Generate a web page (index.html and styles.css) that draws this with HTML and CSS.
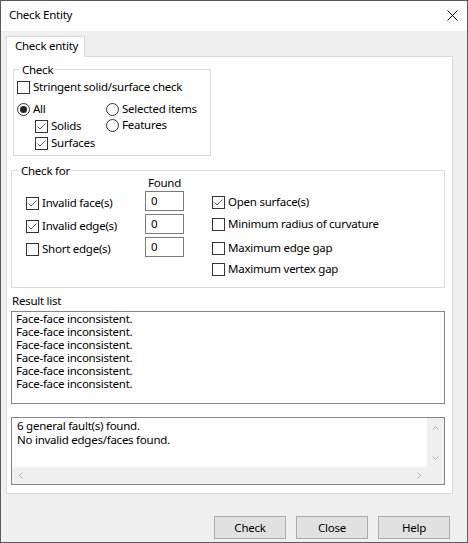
FILE: index.html
```html
<!DOCTYPE html>
<html>
<head>
<meta charset="utf-8">
<title>Check Entity</title>
<link rel="stylesheet" href="styles.css">
</head>
<body>
<div class="window">
  <div class="titlebar">
    <span class="title">Check Entity</span>
    <svg class="close" width="11" height="11" viewBox="0 0 11 11"><path d="M0.5 0.5 L10.5 10.5 M10.5 0.5 L0.5 10.5" stroke="#000" stroke-width="1" fill="none"/></svg>
  </div>
  <div class="body">
    <div class="tab">Check entity</div>
    <div class="panel">
      <div class="group group-check">
        <span class="legend">Check</span>
        <label class="opt"><span class="cb"></span>Stringent solid/surface check</label>
        <div class="mode">
          <div class="mode-left">
            <label class="opt"><span class="rb on"></span>All</label>
            <label class="opt sub"><span class="cb"><svg width="11" height="11" viewBox="0 0 11 11"><path d="M1.5 5.5 L4 8 L9.5 2.5" stroke="#5a5a5a" fill="none"/></svg></span>Solids</label>
            <label class="opt sub"><span class="cb"><svg width="11" height="11" viewBox="0 0 11 11"><path d="M1.5 5.5 L4 8 L9.5 2.5" stroke="#5a5a5a" fill="none"/></svg></span>Surfaces</label>
          </div>
          <div class="mode-right">
            <label class="opt short"><span class="rb"></span>Selected items</label>
            <label class="opt short"><span class="rb"></span>Features</label>
          </div>
        </div>
      </div>

      <div class="group group-for">
        <span class="legend">Check for</span>
        <div class="for-grid">
          <span class="found">Found</span>
          <label class="opt for-opt"><span class="cb"><svg width="11" height="11" viewBox="0 0 11 11"><path d="M1.5 5.5 L4 8 L9.5 2.5" stroke="#5a5a5a" fill="none"/></svg></span>Invalid face(s)</label>
          <div class="tb">0</div>
          <label class="opt for-opt"><span class="cb"><svg width="11" height="11" viewBox="0 0 11 11"><path d="M1.5 5.5 L4 8 L9.5 2.5" stroke="#5a5a5a" fill="none"/></svg></span>Invalid edge(s)</label>
          <div class="tb">0</div>
          <label class="opt for-opt"><span class="cb"></span>Short edge(s)</label>
          <div class="tb">0</div>
        </div>
        <div class="for-right">
          <label class="opt r22"><span class="cb"><svg width="11" height="11" viewBox="0 0 11 11"><path d="M1.5 5.5 L4 8 L9.5 2.5" stroke="#5a5a5a" fill="none"/></svg></span>Open surface(s)</label>
          <label class="opt r24"><span class="cb"></span>Minimum radius of curvature</label>
          <label class="opt r21"><span class="cb"></span>Maximum edge gap</label>
          <label class="opt r22"><span class="cb"></span>Maximum vertex gap</label>
        </div>
      </div>

      <div class="result-label">Result list</div>
      <div class="list">
        <div class="line">Face-face inconsistent.</div>
        <div class="line">Face-face inconsistent.</div>
        <div class="line">Face-face inconsistent.</div>
        <div class="line">Face-face inconsistent.</div>
        <div class="line">Face-face inconsistent.</div>
        <div class="line">Face-face inconsistent.</div>
      </div>

      <div class="summary">
        <div class="summary-text">
          <div>6 general fault(s) found.</div>
          <div>No invalid edges/faces found.</div>
        </div>
        <div class="vscroll">
          <svg width="7" height="4" viewBox="0 0 7 4"><path d="M0.5 3.5 L3.5 0.5 L6.5 3.5" stroke="#b4b4b4" fill="none"/></svg>
          <svg width="7" height="4" viewBox="0 0 7 4"><path d="M0.5 0.5 L3.5 3.5 L6.5 0.5" stroke="#b4b4b4" fill="none"/></svg>
        </div>
        <div class="hscroll">
          <svg width="4" height="7" viewBox="0 0 4 7"><path d="M3.5 0.5 L0.5 3.5 L3.5 6.5" stroke="#b4b4b4" fill="none"/></svg>
          <svg width="4" height="7" viewBox="0 0 4 7"><path d="M0.5 0.5 L3.5 3.5 L0.5 6.5" stroke="#b4b4b4" fill="none"/></svg>
        </div>
        <div class="corner"></div>
      </div>
    </div>
    <div class="buttons">
      <button class="btn">Check</button>
      <button class="btn">Close</button>
      <button class="btn">Help</button>
    </div>
  </div>
</div>
</body>
</html>
```

FILE: styles.css
```css
* { box-sizing: border-box; }

body {
  margin: 0;
  font-family: "Noto Sans", sans-serif;
  font-size: 11.5px;
  letter-spacing: -0.25px;
  color: #000;
  background: #fff;
}

.window {
  width: 468px;
  height: 543px;
  border: 1px solid #5a5a5a;
  background: #f0f0f0;
}

.titlebar {
  height: 30px;
  background: #fff;
  display: flex;
  justify-content: space-between;
  align-items: flex-start;
  padding: 6px 9px 0 8px;
}

.title { line-height: 15px; }

.close { margin-top: 3px; }

.body { padding: 5px 0 0 5px; }

.tab {
  position: relative;
  z-index: 1;
  width: 79px;
  height: 21px;
  margin-bottom: -1px;
  border: 1px solid #d9d9d9;
  border-bottom: none;
  background: #fff;
  padding: 1px 0 0 8px;
  line-height: 15px;
}

.panel {
  width: 447px;
  height: 438px;
  border: 1px solid #d9d9d9;
  background: #fff;
}

.group {
  position: relative;
  border: 1px solid #dcdcdc;
}

.legend {
  position: absolute;
  top: -8px;
  left: 7px;
  background: #fff;
  padding: 0 2px;
  line-height: 15px;
}

.group-check {
  margin: 12px 0 0 6px;
  width: 198px;
  height: 87px;
  padding: 9px 0 0 3px;
}

.group-check .legend { left: 6px; }

.opt {
  display: flex;
  align-items: flex-start;
  gap: 3px;
  height: 17px;
  line-height: 15px;
  white-space: nowrap;
}

.cb {
  flex: none;
  width: 13px;
  height: 13px;
  margin-top: 2px;
  border: 1px solid #333;
  background: #fff;
  display: flex;
}

.rb {
  flex: none;
  width: 13px;
  height: 13px;
  margin-top: 2px;
  border: 1px solid #333;
  border-radius: 50%;
  background: #fff;
  display: flex;
  align-items: center;
  justify-content: center;
}

.rb.on::after {
  content: "";
  width: 7px;
  height: 7px;
  border-radius: 50%;
  background: #222;
}

.mode {
  display: flex;
  margin-top: 5px;
}

.mode-left { width: 89px; }

.sub { padding-left: 18px; }

.opt.short { height: 16px; }

.group-for {
  margin: 14px 0 0 4px;
  width: 434px;
  height: 118px;
  display: flex;
  align-items: flex-start;
  padding: 4px 0 0 14px;
}

.for-grid {
  display: grid;
  grid-template-columns: 119px 39px;
  grid-template-rows: 16px 23px 23px 23px;
}

.found {
  grid-column: 2;
  text-align: center;
  line-height: 15px;
}

.for-opt { margin-top: 4px; }

.tb {
  width: 39px;
  height: 20px;
  border: 1px solid #7a7a7a;
  background: #fff;
  padding-left: 5px;
  line-height: 18px;
}

.for-right {
  margin: 19px 0 0 28px;
}

.r22 { height: 22px; }
.r24 { height: 24px; }
.r21 { height: 21px; }

.result-label {
  margin: 5px 0 0 5px;
  line-height: 15px;
}

.list {
  margin: 3px 0 0 4px;
  width: 434px;
  height: 93px;
  border: 1px solid #828790;
  padding: 0 0 0 4px;
  line-height: 13px;
}

.line {
  height: 13px;
  overflow: visible;
}

.summary {
  margin: 13px 0 0 4px;
  width: 434px;
  height: 68px;
  border: 1px solid #828790;
  display: grid;
  grid-template-columns: 1fr 17px;
  grid-template-rows: 1fr 17px;
}

.summary-text {
  padding: 1px 0 0 5px;
  line-height: 14px;
}

.vscroll {
  background: #f0f0f0;
  display: flex;
  flex-direction: column;
  justify-content: space-between;
  align-items: center;
  padding: 8px 0 7px;
}

.hscroll {
  background: #f0f0f0;
  display: flex;
  justify-content: space-between;
  align-items: center;
  padding: 0 6px 0 7px;
}

.corner { background: #f0f0f0; }

.buttons {
  display: flex;
  justify-content: flex-end;
  gap: 10px;
  margin-top: 22px;
  padding-right: 17px;
}

.btn {
  width: 72px;
  height: 23px;
  border: 1px solid #adadad;
  background: #e1e1e1;
  font: inherit;
  letter-spacing: inherit;
  color: #000;
  line-height: 21px;
  padding: 0;
  text-align: center;
}
```
